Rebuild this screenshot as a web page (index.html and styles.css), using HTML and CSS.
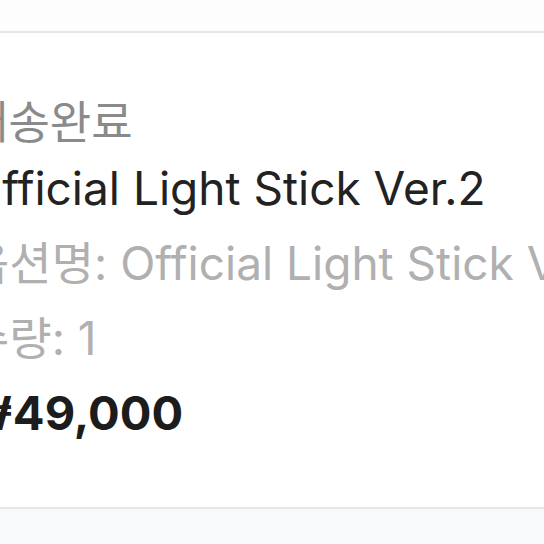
FILE: index.html
```html
<!DOCTYPE html>
<html lang="ko">
<head>
    <meta charset="UTF-8">
    <meta name="viewport" content="width=device-width, initial-scale=1.0">
    <title>주문 상세</title>
    <link rel="stylesheet" href="styles.css">
</head>
<body>
    <div class="page">
        <div class="top-strip"></div>
        <div class="order-card">
            <div class="order-info">
                <div class="status">배송완료</div>
                <div class="product-name">Official Light Stick Ver.2</div>
                <div class="option">옵션명: Official Light Stick Ver.2</div>
                <div class="quantity">수량: 1</div>
                <div class="price">₩49,000</div>
            </div>
        </div>
        <div class="bottom-area"></div>
    </div>
</body>
</html>
```

FILE: styles.css
```css
html, body {
    margin: 0;
    height: 100%;
    overflow: hidden;
    font-family: Inter, "Noto Sans CJK KR", sans-serif;
    background: #fdfdfd;
}
.page {
    display: flex;
    flex-direction: column;
    height: 100vh;
}
.top-strip {
    height: 31px;
    background: #fdfdfd;
    border-bottom: 2px solid #e6e6e6;
}
.order-card {
    height: 474px;
    background: #fff;
    border-bottom: 2px solid #e6e6e6;
    overflow: hidden;
}
.order-info {
    margin-left: -33px;
    padding-top: 62px;
    white-space: nowrap;
}
.status {
    font-size: 45px;
    line-height: 56px;
    color: #8a8a8a;
}
.product-name {
    font-size: 46px;
    line-height: 74px;
    color: #222;
}
.option {
    font-size: 46px;
    line-height: 76px;
    color: #b0b0b0;
}
.quantity {
    font-size: 46px;
    line-height: 74px;
    color: #b0b0b0;
}
.price {
    margin-left: -3px;
    font-size: 47px;
    line-height: 76px;
    font-weight: 700;
    color: #1c1c1c;
}
.bottom-area {
    flex: 1;
    background: #f8f9fa;
}
```
